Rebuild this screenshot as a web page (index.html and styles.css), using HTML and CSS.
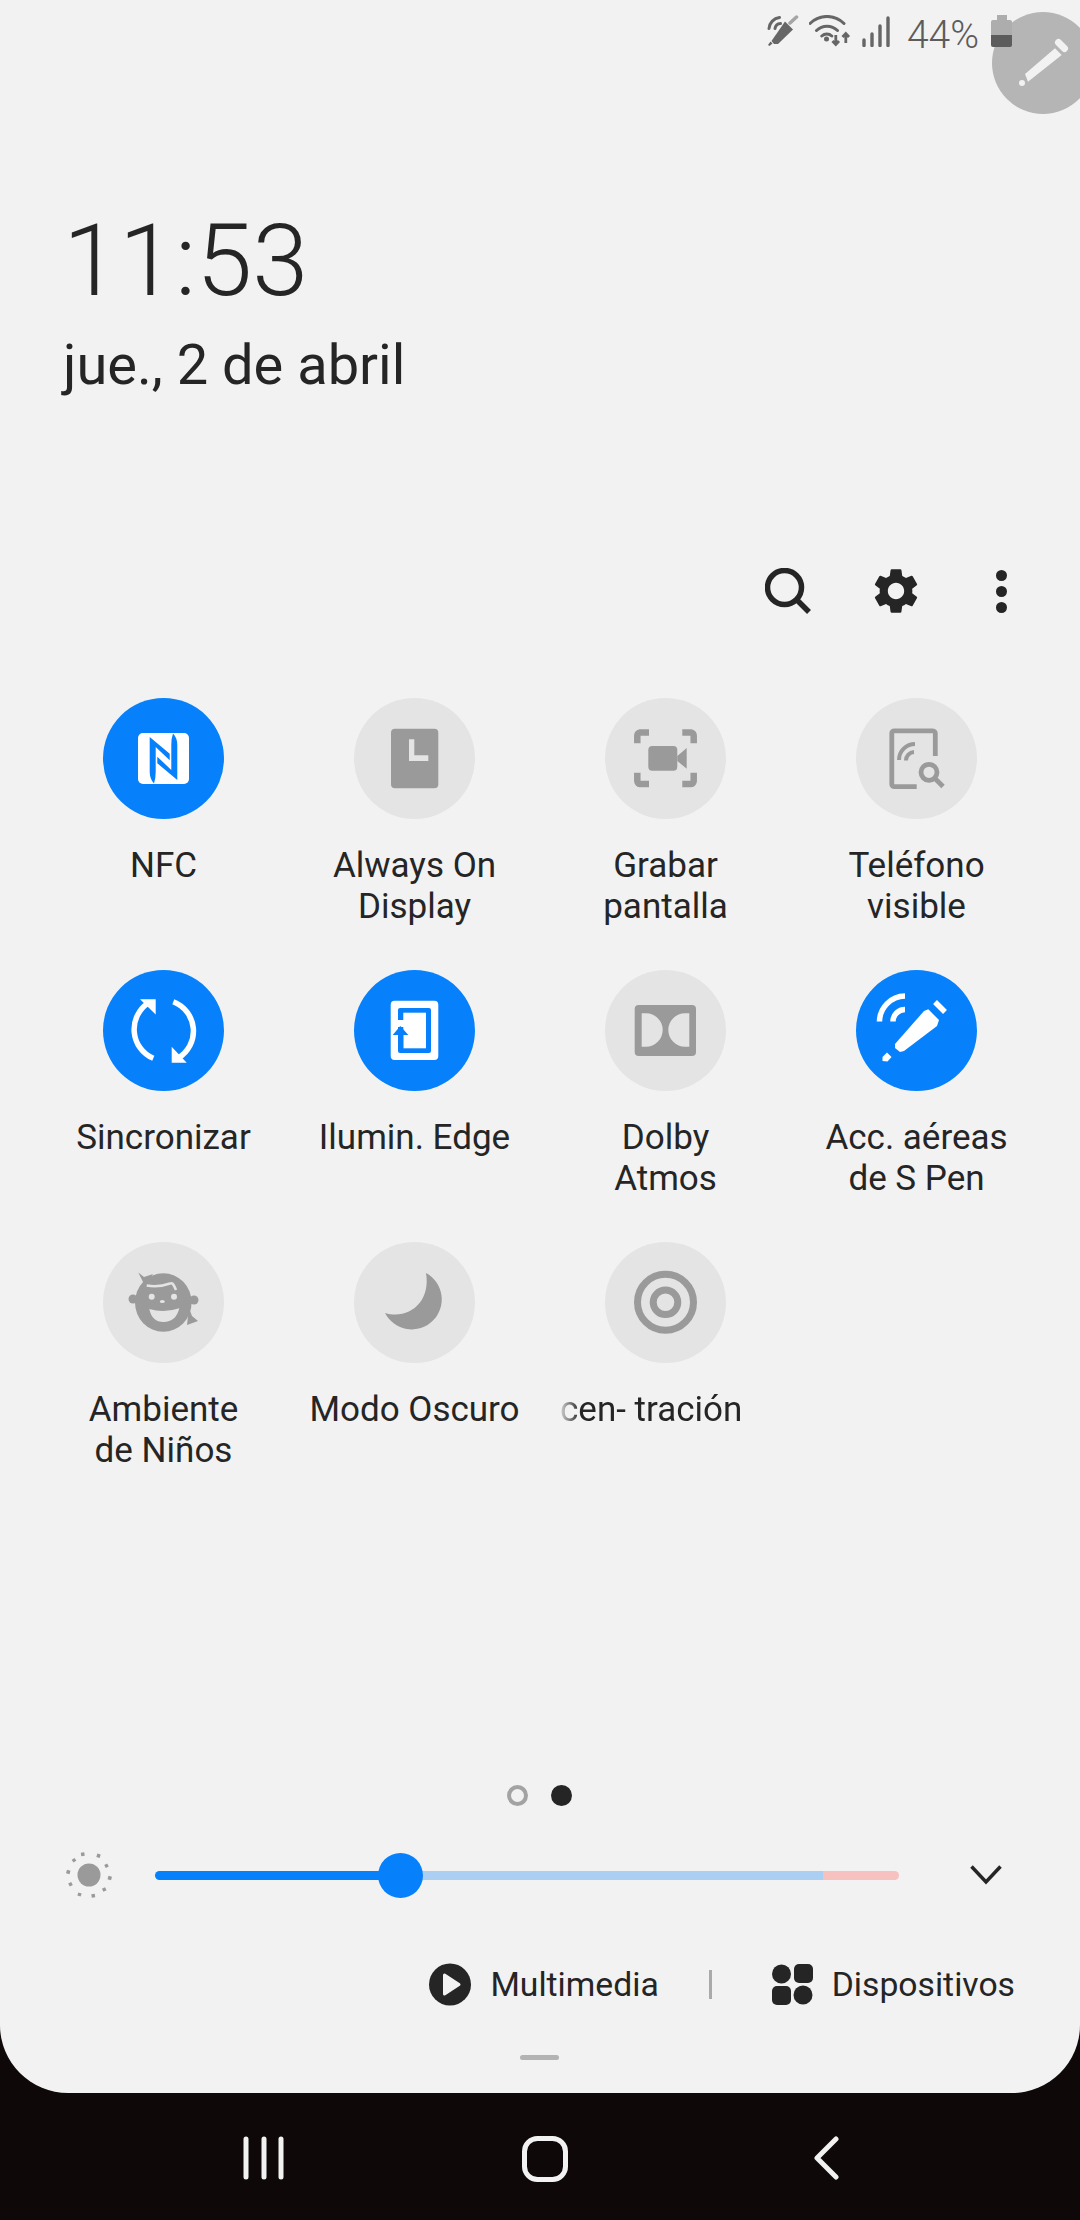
FILE: index.html
```html
<!DOCTYPE html>
<html lang="es">
<head>
<meta charset="utf-8">
<title>Panel rápido</title>
<link rel="stylesheet" href="styles.css">
</head>
<body>
<main class="panel">
  <header class="status">
    <svg class="st-pen" width="32" height="32" viewBox="0 0 32 32"><path class="s-light" d="M23 8 29.500 2"/><path class="f-dark" d="M18 6.500 26 14.500 11 29 7 29 4.500 26Z"/><path class="f-dark" d="M3.500 26.500 5.500 28.500 2.500 31 1 30Z"/><path class="s-dark" d="M2 13.500A12 12 0 0 1 12.500 2.500M8 13.500A6 6 0 0 1 13.500 8.500"/></svg>
    <svg class="st-wifi" width="42" height="32" viewBox="0 0 42 32"><path class="s-dark" d="M1 8.500A24 24 0 0 1 35 8.500M7.500 15.500A15 15 0 0 1 28.500 15.500M12.800 21A7.500 7.500 0 0 1 22.800 21"/><circle class="f-dark" cx="17.500" cy="24" r="2.500"/><path class="s-arrow" d="M26.800 20V29M23.500 26 26.800 29.500 30 26M36.800 28V19M33.500 22 36.800 18.500 40 22"/></svg>
    <svg class="st-signal" width="29" height="31" viewBox="0 0 29 31"><g class="s-bars"><path d="M3 24V29.500M11 18V29.500M19 10V29.500M27 2V29.500"/></g></svg>
    <span class="st-text">44%</span>
    <svg class="st-batt" width="21" height="33" viewBox="0 0 21 33"><path class="b-light" d="M6 0H16V5H19Q21 5 21 7V20H0V7Q0 5 2 5H6Z"/><path class="b-dark" d="M0 20H21V30Q21 32 19 32H2Q0 32 0 30Z"/></svg>
  </header>

  <div class="fab" aria-hidden="true">
    <svg width="102" height="102" viewBox="0 0 102 102"><path class="fab-w" d="M63 36.300 69.700 43 36 69.700 33 62Z"/><path class="fab-c" d="M66.500 30.500 72.500 36.500"/><circle class="fab-f" cx="30" cy="71" r="3"/></svg>
  </div>

  <section class="clock">
    <div class="time">11:53</div>
    <div class="date">jue., 2 de abril</div>
  </section>

  <nav class="actions">
    <svg class="act-search" width="46" height="46" viewBox="0 0 46 46"><circle class="act-s" cx="19.500" cy="19.500" r="17"/><path class="act-s" d="M31 31 44 44"/></svg>
    <svg class="act-gear" width="44" height="46" viewBox="2.300 2 19.400 20"><path d="M19.140 12.940c.04-.3.06-.61.06-.94 0-.32-.02-.64-.07-.94l2.030-1.580c.18-.14.23-.41.12-.61l-1.920-3.320c-.12-.22-.37-.29-.59-.22l-2.390.96c-.5-.38-1.030-.7-1.620-.94l-.36-2.540c-.04-.24-.24-.41-.48-.41h-3.840c-.24 0-.43.17-.47.41l-.36 2.540c-.59.24-1.130.57-1.620.94l-2.390-.96c-.22-.08-.47 0-.59.22L2.740 8.870c-.12.21-.08.47.12.61l2.030 1.580c-.05.3-.09.63-.09.94s.02.64.07.94l-2.030 1.580c-.18.14-.23.41-.12.61l1.920 3.320c.12.22.37.29.59.22l2.390-.96c.5.38 1.030.7 1.620.94l.36 2.540c.05.24.24.41.48.41h3.840c.24 0 .44-.17.47-.41l.36-2.540c.59-.24 1.130-.56 1.620-.94l2.390.96c.22.08.47 0 .59-.22l1.920-3.320c.12-.22.07-.47-.12-.61l-2.010-1.580zM12 15.600c-1.980 0-3.600-1.620-3.600-3.600s1.620-3.600 3.600-3.600 3.600 1.620 3.600 3.600-1.620 3.600-3.600 3.600z"/></svg>
    <div class="act-more"><i></i><i></i><i></i></div>
  </nav>

  <section class="grid">
    <div class="tile">
      <div class="tog on"><svg viewBox="0 0 121 121"><rect class="w" x="35" y="35" width="51" height="51" rx="5"/><path class="b" d="M46.700 39V74Q46.700 81 51 85.500 52.700 81 52.700 74V49L66.700 62.300V55.700ZM74.300 82V47Q74.300 40 70 35.500 68.300 40 68.300 47V72L54.300 58.700V65.300Z"/></svg></div>
      <div class="label">NFC</div>
    </div>
    <div class="tile">
      <div class="tog"><svg viewBox="0 0 121 121"><rect class="g" x="37" y="30.700" width="47.300" height="59.600" rx="4"/><path class="l" d="M55 41.300H60.300V57.300H74.300V63H55Z"/></svg></div>
      <div class="label">Always On<br>Display</div>
    </div>
    <div class="tile">
      <div class="tog"><svg viewBox="0 0 121 121"><path class="gs6" d="M44 34.500H35A3 3 0 0 0 32.300 37.500V45.300M77.300 34.500H86A3 3 0 0 1 88.700 37.500V45.300M32.300 74.700V83A3 3 0 0 0 35 86H44M88.700 74.700V83A3 3 0 0 1 86 86H77.300"/><rect class="g" x="43.300" y="48" width="29" height="24.700" rx="4"/><path class="g" d="M72.300 58 81.700 50V70.700L72.300 63Z"/></svg></div>
      <div class="label">Grabar<br>pantalla</div>
    </div>
    <div class="tile">
      <div class="tog"><svg viewBox="0 0 121 121"><path class="gs5" d="M79.300 58V35.500A2.500 2.500 0 0 0 76.800 32.800H38.500A2.500 2.500 0 0 0 35.800 35.500V86A2.500 2.500 0 0 0 38.500 88.600H60.700"/><path class="gs4" d="M43 62A16 16 0 0 1 59 46M50 62.500A8.500 8.500 0 0 1 58 54"/><circle class="gs5" cx="73" cy="74.300" r="8"/><path class="gs5" d="M79 80.500 87 88.500"/></svg></div>
      <div class="label">Teléfono<br>visible</div>
    </div>

    <div class="tile">
      <div class="tog on"><svg viewBox="0 0 121 121"><path class="ws" d="M50.300 88.300A31.500 31.500 0 0 1 45.300 33M70.300 31.700A31.500 31.500 0 0 1 75.300 88"/><path class="w" d="M37 29.300H52.700V44.500ZM68.700 92.700H83.700L68.700 76.700Z"/></svg></div>
      <div class="label">Sincronizar</div>
    </div>
    <div class="tile">
      <div class="tog on"><svg viewBox="0 0 121 121"><rect class="w" x="36.700" y="30.700" width="47.600" height="59.300" rx="4"/><rect class="b" x="44" y="38" width="33" height="45" rx="2"/><rect class="w" x="49.300" y="42.700" width="22.700" height="35.600"/><rect class="w" x="43" y="50" width="7" height="7"/><path class="b" d="M46.300 56 54.300 65H49.300V79H44V65H38.700Z"/></svg></div>
      <div class="label">Ilumin. Edge</div>
    </div>
    <div class="tile">
      <div class="tog"><svg viewBox="0 0 121 121"><rect class="g" x="29.700" y="35" width="61.300" height="51" rx="4"/><path class="l" d="M36.700 43.300H41A16.700 16.700 0 0 1 41 76.700H36.700ZM84.300 43.300H80A16.700 16.700 0 0 0 80 76.700H84.300Z"/></svg></div>
      <div class="label">Dolby<br>Atmos</div>
    </div>
    <div class="tile">
      <div class="tog on"><svg viewBox="0 0 121 121"><path class="w" d="M72.300 39.300 83 50 81 56 48 81 44 82 39 78 39 74 68 41Z"/><path class="w" d="M31 82.500 35.500 87 31.500 91.500 26.500 91 26.500 87Z"/><path class="ws" d="M79 32 89 42M23.500 51.500A26 26 0 0 1 49 26M37 51.500A12 12 0 0 1 49 39.500"/></svg></div>
      <div class="label">Acc. aéreas<br>de S Pen</div>
    </div>

    <div class="tile">
      <div class="tog"><svg viewBox="0 0 121 121"><ellipse class="g" cx="60.300" cy="60.500" rx="28.300" ry="29.300"/><circle class="g" cx="30" cy="57" r="4.500"/><circle class="g" cx="91" cy="58" r="4.500"/><path class="g" d="M35.300 30.500 41 35 50 32 42 44ZM86 66 89 74 95 79 84 83Z"/><path class="ls" d="M43.700 43.500C52 45 60 44 67 41.500 69 40.500 70 41 73 48"/><circle class="l" cx="48.700" cy="54.700" r="3"/><circle class="l" cx="71" cy="54.700" r="3"/><ellipse class="l" cx="59.300" cy="59.500" rx="2.500" ry="1.500"/><path class="l" d="M46.300 67Q61 71.500 76.300 66.300 73 80 60.500 80 49 80 46.300 67Z"/></svg></div>
      <div class="label">Ambiente<br>de Niños</div>
    </div>
    <div class="tile">
      <div class="tog"><svg viewBox="0 0 121 121"><path class="g" d="M72 31A30 30 0 1 1 31 71C55 78 77 60 72 31Z"/></svg></div>
      <div class="label">Modo Oscuro</div>
    </div>
    <div class="tile">
      <div class="tog"><svg viewBox="0 0 121 121"><circle class="gs7" cx="60.500" cy="60.300" r="28"/><circle class="gs7" cx="60.500" cy="60.300" r="12.300"/></svg></div>
      <div class="label label-fade">cen- tración</div>
    </div>
  </section>

  <div class="pager"><span class="dot-o"></span><span class="dot-f"></span></div>

  <div class="bright">
    <svg class="sun" width="50" height="50" viewBox="0 0 50 50"><circle class="sun-c" cx="25" cy="25" r="11.500"/><g class="sun-r"><path d="M18.500 2.500 19 6M35 4 34 7.500M44 15 41 16.500M47.500 28.500 44 27.500M41 41 39.500 38M29.500 47.500 29 44M15 46 16 43M5 35 8 33.500M2.500 21.500 6 22.500M9 9 11 11.500"/></g></svg>
    <div class="track">
      <div class="track-fill"></div>
      <div class="track-rest"></div>
      <div class="track-high"></div>
      <div class="thumb"></div>
    </div>
    <svg class="chev" width="32" height="20" viewBox="0 0 32 20"><path d="M1.500 1.500 16 17 30.500 1.500"/></svg>
  </div>

  <div class="media">
    <svg class="play" width="42" height="43" viewBox="0 0 42 43"><circle cx="21" cy="21.500" r="21"/><path d="M15.500 12V31L30 21.500Z"/></svg>
    <span class="m-text">Multimedia</span>
    <span class="m-sep"></span>
    <svg class="devs" width="41" height="41" viewBox="0 0 41 41"><circle cx="9.500" cy="10" r="9.500"/><rect x="22" y="0" width="19" height="19" rx="5"/><rect x="0" y="22" width="19" height="19" rx="5"/><circle cx="31" cy="31" r="9.500"/></svg>
    <span class="m-text m-text-d">Dispositivos</span>
  </div>

  <div class="handle"></div>
</main>

<footer class="nav">
  <div class="nav-btn"><svg width="44" height="44" viewBox="0 0 44 44"><path d="M4 3V41M22 3V41M39 3V41"/></svg></div>
  <div class="nav-btn"><svg width="46" height="46" viewBox="0 0 46 46"><rect x="2.500" y="2.500" width="41" height="41" rx="13"/></svg></div>
  <div class="nav-btn"><svg width="26" height="44" viewBox="0 0 26 44"><path d="M23 3 4 22 23 41"/></svg></div>
</footer>
</body>
</html>
```

FILE: styles.css
```css
* { box-sizing: border-box; }
html, body { margin: 0; height: 2220px; width: 1080px; overflow: hidden; }
body {
  background: #0e0808;
  font-family: Roboto, "Noto Sans", sans-serif;
  color: #252525;
  display: flex;
  flex-direction: column;
}
.panel {
  position: relative;
  height: 2093px;
  background: #f2f2f2;
  border-radius: 0 0 68px 68px;
  display: flex;
  flex-direction: column;
  flex: none;
}

/* status bar */
.status {
  height: 66px;
  padding: 15px 68px 0 0;
  display: flex;
  justify-content: flex-end;
  align-items: flex-start;
}
.status svg { flex: none; display: block; position: relative; z-index: 2; }
.st-pen { margin-right: 10px; }
.st-wifi { margin-right: 10px; }
.st-signal { margin-right: 17px; margin-top: 1px; }
.st-text {
  font-size: 39px;
  font-weight: 300;
  line-height: 46px;
  color: #5c5c5c;
  margin-top: -3px;
  margin-right: 12px;
}
.s-dark { fill: none; stroke: #666; stroke-width: 3; stroke-linecap: round; }
.f-dark { fill: #666; }
.s-light { fill: none; stroke: #a5a5a5; stroke-width: 3.500; stroke-linecap: round; }
.s-arrow { fill: none; stroke: #666; stroke-width: 2.800; }
.s-bars path { fill: none; stroke: #666; stroke-width: 3.400; stroke-linecap: round; }
.b-light { fill: #adadad; }
.b-dark { fill: #5c5c5c; }

.fab {
  position: absolute;
  left: 992px;
  top: 12px;
  width: 102px;
  height: 102px;
  border-radius: 50%;
  background: #b5b5b5;
  z-index: 1;
}
.fab svg { display: block; }
.fab-w { fill: #f2f2f2; }
.fab-c { fill: none; stroke: #f2f2f2; stroke-width: 7; stroke-linecap: round; }
.fab-f { fill: #f2f2f2; }

/* clock */
.clock { padding-left: 63px; margin-top: 139px; }
.time {
  font-size: 101px;
  font-weight: 300;
  line-height: 112px;
}
.date {
  font-size: 56px;
  line-height: 62px;
  margin-top: 17px;
}

/* actions */
.actions {
  margin-top: 172px;
  height: 46px;
  padding-left: 765px;
  display: flex;
  align-items: center;
}
.actions svg { display: block; flex: none; }
.act-gear { margin-left: 63px; fill: #252525; }
.act-s { fill: none; stroke: #252525; stroke-width: 5.500; }
.act-more {
  margin-left: 78px;
  display: flex;
  flex-direction: column;
  gap: 5px;
}
.act-more i { display: block; width: 11px; height: 11px; border-radius: 50%; background: #252525; }

/* tiles */
.grid {
  margin-top: 84px;
  padding-left: 38px;
  display: grid;
  grid-template-columns: repeat(4, 251px);
  grid-auto-rows: 272px;
}
.tile { display: flex; flex-direction: column; align-items: center; }
.tog {
  width: 121px;
  height: 121px;
  border-radius: 50%;
  background: #e4e4e4;
  flex: none;
}
.tog.on { background: #0681fb; }
.tog svg { display: block; width: 121px; height: 121px; }
.label {
  margin-top: 26px;
  font-size: 35px;
  line-height: 41px;
  text-align: center;
  white-space: nowrap;
}
.label-fade {
  align-self: flex-start;
  margin-left: 20px;
  -webkit-mask-image: linear-gradient(to right, rgba(0, 0, 0, .15) 0, #000 20px);
  mask-image: linear-gradient(to right, rgba(0, 0, 0, .15) 0, #000 20px);
}
.w { fill: #fff; }
.b { fill: #0681fb; }
.g { fill: #9a9a9a; }
.l { fill: #e4e4e4; }
.ws { fill: none; stroke: #fff; stroke-width: 5.500; }
.ls { fill: none; stroke: #e4e4e4; stroke-width: 2.500; }
.gs4 { fill: none; stroke: #9a9a9a; stroke-width: 4; }
.gs5 { fill: none; stroke: #9a9a9a; stroke-width: 4.800; }
.gs6 { fill: none; stroke: #9a9a9a; stroke-width: 6.500; }
.gs7 { fill: none; stroke: #9a9a9a; stroke-width: 7; }

/* pager */
.pager {
  margin-top: auto;
  padding-left: 507px;
  display: flex;
  gap: 23px;
}
.dot-o, .dot-f { width: 21px; height: 21px; border-radius: 50%; display: block; }
.dot-o { border: 4px solid #a3a3a3; }
.dot-f { background: #252525; }

/* brightness */
.bright {
  margin-top: 44px;
  height: 50px;
  padding-left: 64px;
  display: flex;
  align-items: center;
}
.sun { flex: none; display: block; }
.sun-c { fill: #9a9a9a; }
.sun-r path { fill: none; stroke: #9a9a9a; stroke-width: 3.500; }
.track {
  position: relative;
  margin-left: 41px;
  width: 744px;
  height: 9px;
  border-radius: 5px;
  display: flex;
}
.track-fill { width: 245px; background: #0681fb; border-radius: 5px 0 0 5px; }
.track-rest { width: 423px; background: #abcff3; }
.track-high { flex: 1; background: #f7c1c0; border-radius: 0 5px 5px 0; }
.thumb {
  position: absolute;
  left: 223px;
  top: -18px;
  width: 45px;
  height: 45px;
  border-radius: 50%;
  background: #0681fb;
}
.chev { margin-left: 71px; flex: none; display: block; fill: none; stroke: #252525; stroke-width: 3.500; }

/* media row */
.media {
  margin-top: 63px;
  height: 43px;
  padding-right: 65px;
  display: flex;
  justify-content: flex-end;
  align-items: center;
}
.play { flex: none; display: block; margin-right: 19px; }
.play circle { fill: #252525; }
.play path { fill: #f2f2f2; stroke: #f2f2f2; stroke-width: 3; stroke-linejoin: round; }
.m-text { font-size: 33.700px; line-height: 43px; white-space: nowrap; }
.m-sep { width: 3px; height: 29px; background: #aaa; margin: 0 60px 0 50px; flex: none; }
.devs { flex: none; display: block; fill: #252525; margin-right: 19px; }

.handle {
  margin: 49px 0 33px 520px;
  width: 39px;
  height: 5px;
  border-radius: 3px;
  background: #b3b3b3;
  flex: none;
}

/* navigation bar */
.nav {
  flex: 1;
  padding: 43px 0 0 123px;
  display: grid;
  grid-template-columns: repeat(3, 281px);
  align-items: start;
  justify-items: center;
}
.nav-btn svg { display: block; fill: none; stroke: #f2f2f2; stroke-width: 5; stroke-linecap: round; stroke-linejoin: round; }
```
